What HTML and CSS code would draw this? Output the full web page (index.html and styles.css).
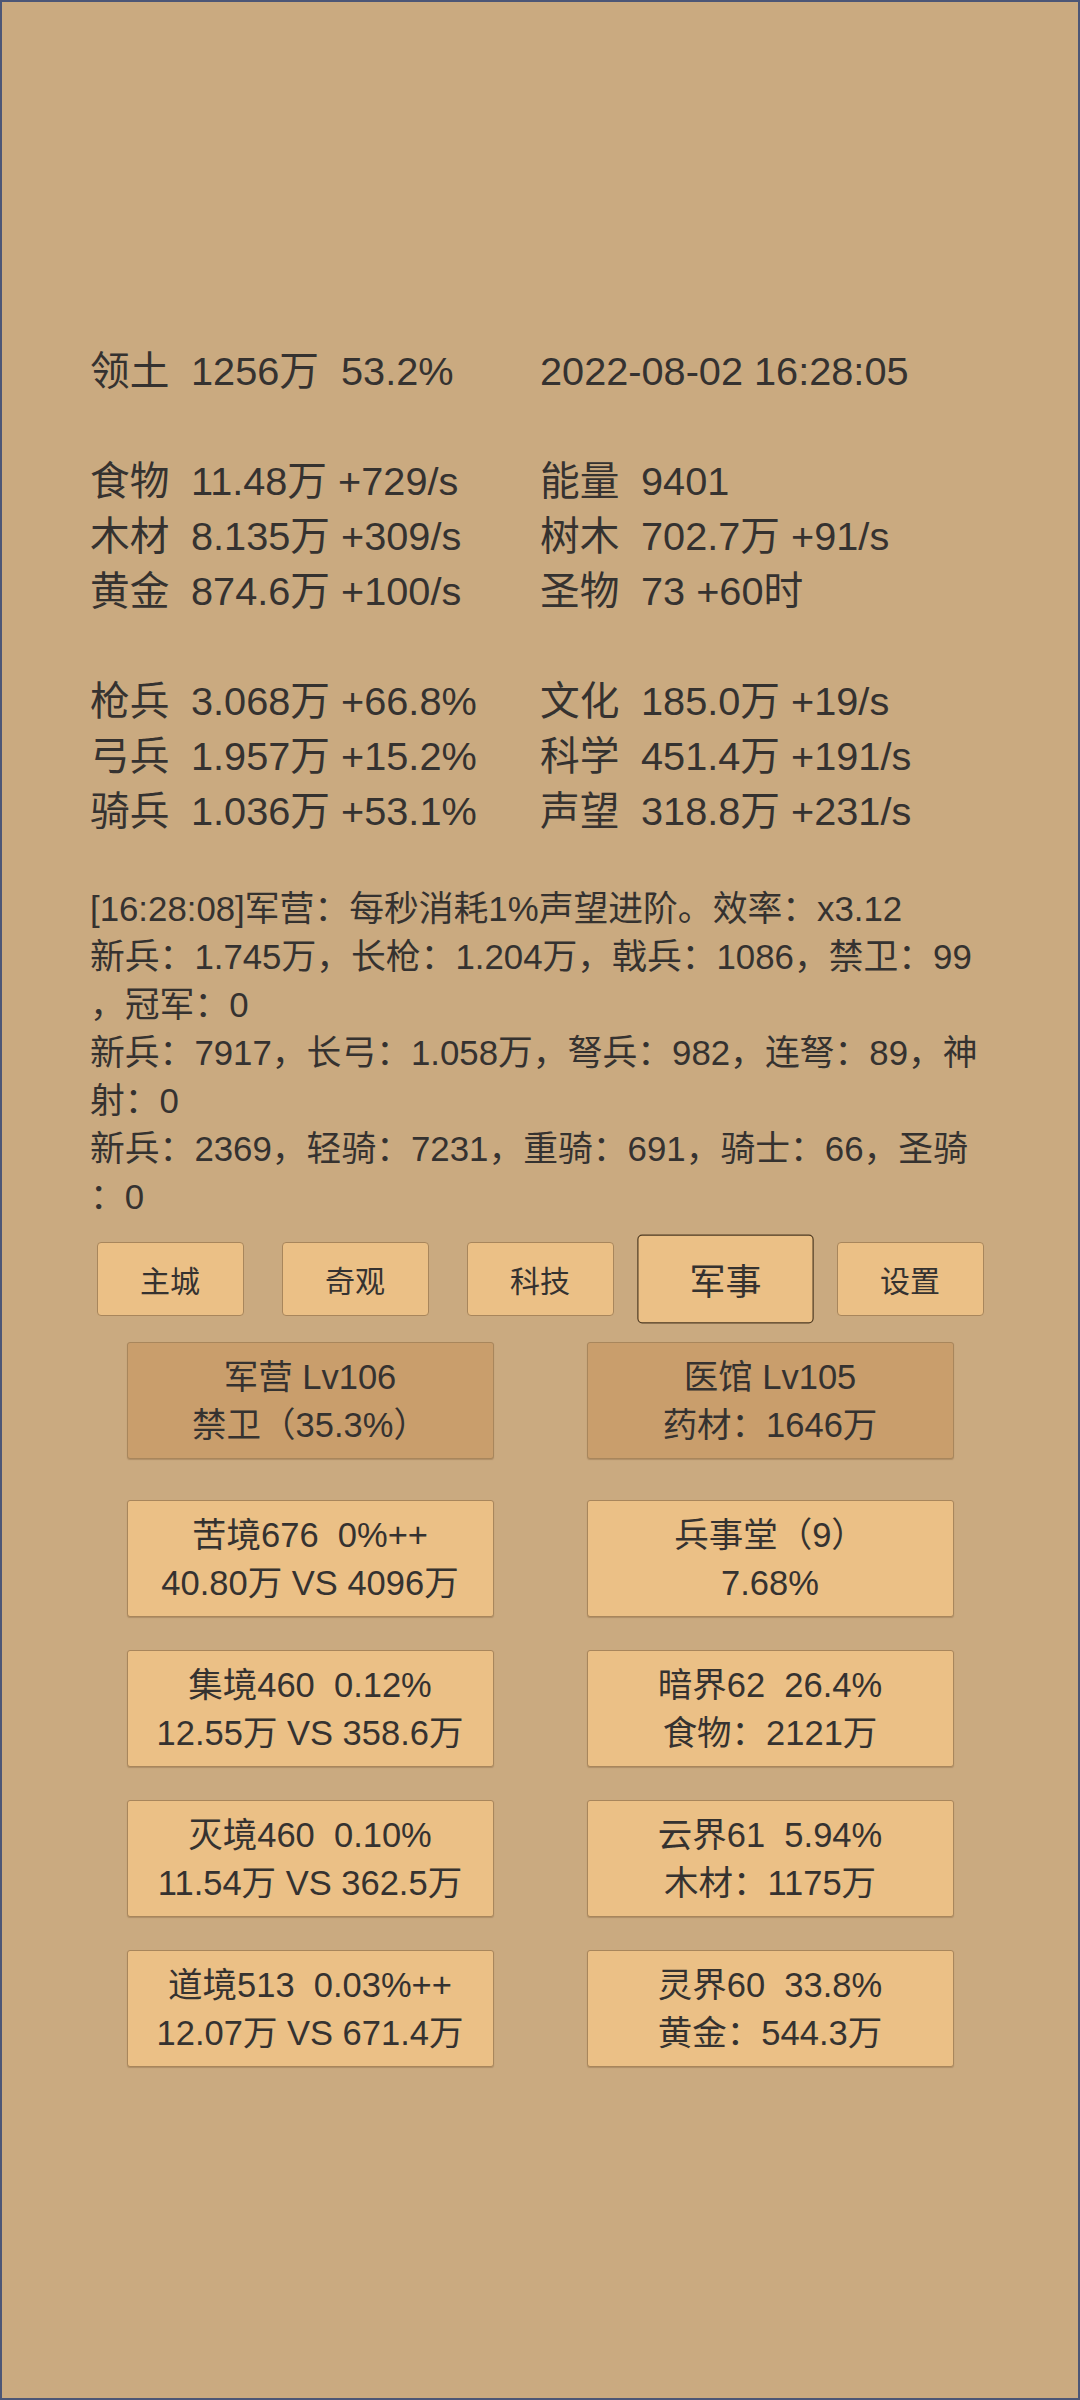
FILE: index.html
```html
<!DOCTYPE html>
<html lang="zh-CN">
<head>
<meta charset="utf-8">
<title>Game</title>
<link rel="stylesheet" href="styles.css">
</head>
<body>
<div class="page">
  <div class="stats">
    <div class="cell"><span class="lbl">领土</span><span class="val">1256万  53.2%</span></div>
    <div class="cell"><span class="val">2022-08-02 16:28:05</span></div>
    <div class="blank"></div>
    <div class="cell"><span class="lbl">食物</span><span class="val">11.48万 +729/s</span></div>
    <div class="cell"><span class="lbl">能量</span><span class="val">9401</span></div>
    <div class="cell"><span class="lbl">木材</span><span class="val">8.135万 +309/s</span></div>
    <div class="cell"><span class="lbl">树木</span><span class="val">702.7万 +91/s</span></div>
    <div class="cell"><span class="lbl">黄金</span><span class="val">874.6万 +100/s</span></div>
    <div class="cell"><span class="lbl">圣物</span><span class="val">73 +60时</span></div>
    <div class="blank"></div>
    <div class="cell"><span class="lbl">枪兵</span><span class="val">3.068万 +66.8%</span></div>
    <div class="cell"><span class="lbl">文化</span><span class="val">185.0万 +19/s</span></div>
    <div class="cell"><span class="lbl">弓兵</span><span class="val">1.957万 +15.2%</span></div>
    <div class="cell"><span class="lbl">科学</span><span class="val">451.4万 +191/s</span></div>
    <div class="cell"><span class="lbl">骑兵</span><span class="val">1.036万 +53.1%</span></div>
    <div class="cell"><span class="lbl">声望</span><span class="val">318.8万 +231/s</span></div>
  </div>

  <div class="log">
    <div class="log-line">[16:28:08]军营：每秒消耗1%声望进阶。效率：x3.12</div>
    <div class="log-line">新兵：1.745万，长枪：1.204万，戟兵：1086，禁卫：99</div>
    <div class="log-line">，冠军：0</div>
    <div class="log-line">新兵：7917，长弓：1.058万，弩兵：982，连弩：89，神</div>
    <div class="log-line">射：0</div>
    <div class="log-line">新兵：2369，轻骑：7231，重骑：691，骑士：66，圣骑</div>
    <div class="log-line">：0</div>
  </div>

  <nav class="tabs">
    <div class="tab">主城</div>
    <div class="tab">奇观</div>
    <div class="tab">科技</div>
    <div class="tab active">军事</div>
    <div class="tab">设置</div>
  </nav>

  <div class="cards top-cards">
    <div class="card dark"><div>军营 Lv106</div><div>禁卫（35.3%）</div></div>
    <div class="card dark"><div>医馆 Lv105</div><div>药材：1646万</div></div>
  </div>

  <div class="cards realm-cards">
    <div class="card"><div>苦境676  0%++</div><div>40.80万 VS 4096万</div></div>
    <div class="card"><div>兵事堂（9）</div><div>7.68%</div></div>
    <div class="card"><div>集境460  0.12%</div><div>12.55万 VS 358.6万</div></div>
    <div class="card"><div>暗界62  26.4%</div><div>食物：2121万</div></div>
    <div class="card"><div>灭境460  0.10%</div><div>11.54万 VS 362.5万</div></div>
    <div class="card"><div>云界61  5.94%</div><div>木材：1175万</div></div>
    <div class="card"><div>道境513  0.03%++</div><div>12.07万 VS 671.4万</div></div>
    <div class="card"><div>灵界60  33.8%</div><div>黄金：544.3万</div></div>
  </div>
</div>
</body>
</html>
```

FILE: styles.css
```css
html, body {
  margin: 0;
  padding: 0;
  background: #caaa80;
}

.page {
  box-sizing: border-box;
  width: 1080px;
  height: 2400px;
  border: 2px solid #4c5676;
  background: #caaa80;
  color: #353230;
  font-family: "Liberation Sans", "Noto Sans CJK SC", sans-serif;
  padding: 342px 88px 0 88px;
  overflow: hidden;
}

.stats {
  display: grid;
  grid-template-columns: 450px 450px;
  font-size: 39.7px;
  line-height: 55px;
}

.cell {
  height: 55px;
  white-space: pre;
}

.blank {
  grid-column: 1 / span 2;
  height: 55px;
}

.lbl {
  display: inline-block;
  width: 101px;
}

.log {
  margin-top: 46px;
  font-size: 34.8px;
  line-height: 48px;
}

.log-line {
  height: 48px;
  white-space: pre;
}

.tabs {
  margin-top: 21px;
  display: flex;
  justify-content: center;
  gap: 38px;
}

.tab {
  box-sizing: border-box;
  width: 147px;
  height: 74px;
  display: flex;
  align-items: center;
  justify-content: center;
  background: #ebc086;
  border: 1px solid #a8865c;
  border-radius: 4px;
  font-size: 30px;
}

.tab.active {
  transform: scale(1.2);
  border-color: #4e3a22;
}

.cards {
  display: grid;
  grid-template-columns: 367px 367px;
  column-gap: 93px;
  row-gap: 33px;
  justify-content: center;
}

.top-cards {
  margin-top: 26px;
}

.realm-cards {
  margin-top: 41px;
}

.card {
  box-sizing: border-box;
  height: 117px;
  padding-top: 10px;
  background: #ebc086;
  border: 1px solid #a8865c;
  border-radius: 3px;
  font-size: 34.5px;
  line-height: 48px;
  text-align: center;
  white-space: pre;
  box-shadow: 0 1px 1px rgba(90, 60, 30, 0.25);
}

.card.dark {
  background: #c99e6c;
}
```
